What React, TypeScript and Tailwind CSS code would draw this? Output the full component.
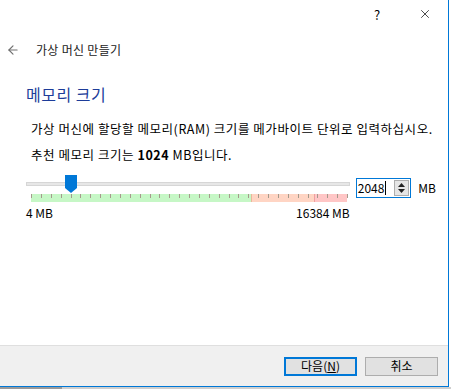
import { ArrowLeft, X } from 'lucide-react';

const TICKS = Array.from({ length: 33 }, (_, i) => i);

export default function App() {
  return (
    <div className="w-[451px] h-[389px] bg-white overflow-hidden" style={{ fontFamily: '"Noto Sans CJK KR", "Liberation Sans", sans-serif' }}>
      <div className="w-[449px] h-[387px] flex flex-col border-r border-b border-[#0078d7] text-[12px] text-black">
        {/* title bar */}
        <div className="h-[28px] flex items-center justify-end shrink-0">
          <span className="w-[10px] mr-[34px] text-[13px] text-black leading-none">?</span>
          <X size={14} strokeWidth={1.2} className="mr-[16px] text-black" />
        </div>
        {/* header */}
        <div className="h-[44px] flex items-center pl-[6px] shrink-0">
          <ArrowLeft size={14} strokeWidth={2} className="text-[#707070]" />
          <span className="ml-[16px] text-[#222] text-[12px] leading-none tracking-[0.3px]">가상 머신 만들기</span>
        </div>
        {/* body */}
        <div className="flex-1 pl-[26px] pr-[12px]">
          <h1 className="text-[16px] leading-none text-[#1d3c99] mt-[14px] tracking-[0.5px]">메모리 크기</h1>
          <p className="mt-[21px] ml-[5px] text-[12.5px] leading-none whitespace-nowrap tracking-[0.55px]">
            가상 머신에 할당할 메모리(RAM) 크기를 메가바이트 단위로 입력하십시오.
          </p>
          <p className="mt-[13px] ml-[5px] text-[12.5px] leading-none whitespace-nowrap tracking-[0.55px]">
            추천 메모리 크기는 <b className="font-bold">1024</b> MB입니다.
          </p>
          <div className="mt-[14px] flex items-start">
            <div className="w-[326px]">
              <div className="relative h-[18px]">
                <div className="absolute left-0 right-0 top-[7px] h-[4px] bg-[#e7e7e7] border border-[#d6d6d6]" />
                <svg className="absolute left-[39px] top-0" width="12" height="18" viewBox="0 0 12 18">
                  <path d="M0 0H12V13L6 18L0 13Z" fill="#0078d7" />
                </svg>
              </div>
              <div className="relative ml-[5px] w-[316px] h-[8px] flex mt-[1px]">
                <div className="w-[220px] bg-[#c6f7c6]" />
                <div className="w-[63px] bg-[#ffd5c4]" />
                <div className="flex-1 bg-[#ffc6c6]" />
                {TICKS.map((i) => (
                  <div
                    key={i}
                    className="absolute top-0 w-px h-[4px] bg-[#a59a8c]"
                    style={{ left: Math.round(i * 9.875) }}
                  />
                ))}
                <div className="absolute top-0 left-[220px] w-px h-[8px] bg-[#e8b89c]" />
                <div className="absolute top-0 left-[283px] w-px h-[8px] bg-[#f0a0a0]" />
              </div>
              <div className="flex justify-between mt-[5px] text-[12px] leading-none">
                <span>4 MB</span>
                <span>16384 MB</span>
              </div>
            </div>
            <div className="ml-[6px] mt-[3px] w-[56px] h-[20px] border border-[#0078d7] flex items-center">
              <span className="ml-[1px] text-[12px] leading-none">2048</span>
              <span className="w-px h-[14px] bg-black ml-[1px]" />
              <div className="ml-auto mr-[1px] w-[15px] h-[16px] bg-[#e5e5e5] border border-[#adadad] flex flex-col items-center justify-center gap-[2px]">
                <svg width="7" height="4" viewBox="0 0 7 4"><path d="M3.5 0L7 4H0Z" fill="#222" /></svg>
                <svg width="7" height="4" viewBox="0 0 7 4"><path d="M0 0H7L3.5 4Z" fill="#222" /></svg>
              </div>
            </div>
            <span className="ml-[7px] mt-[7px] text-[12px] leading-none">MB</span>
          </div>
        </div>
        {/* footer */}
        <div className="h-[41px] shrink-0 bg-[#f0f0f0] border-t border-[#dfdfdf] flex items-center justify-end pr-[10px] gap-[8px]">
          <button className="w-[73px] h-[19px] bg-[#e1e1e1] border-2 border-[#0078d7] text-[12px] leading-none flex items-center justify-center">
            다음(<span className="underline">N</span>)
          </button>
          <button className="w-[73px] h-[19px] bg-[#e1e1e1] border border-[#adadad] text-[12px] leading-none flex items-center justify-center">
            취소
          </button>
        </div>
      </div>
      <div className="flex h-[2px]">
        <div className="w-[62px] bg-[#9a9a9a]" />
        <div className="flex-1 bg-[#cfcfcf]" />
      </div>
    </div>
  );
}
